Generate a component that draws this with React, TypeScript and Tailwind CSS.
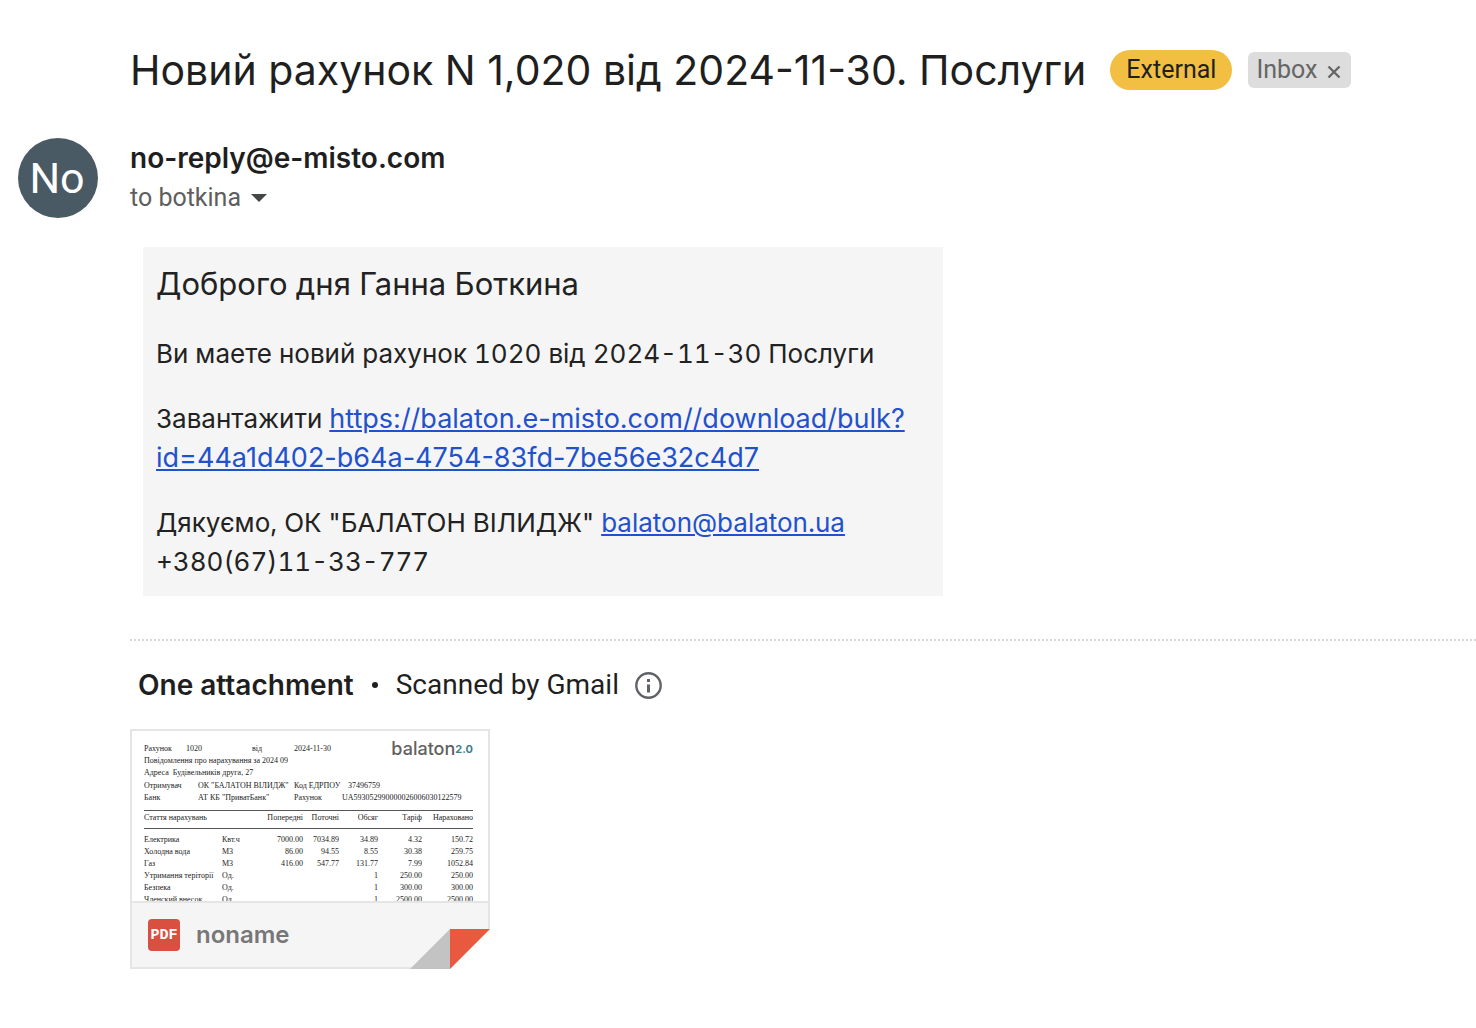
const charges = [
  { name: "Електрика", unit: "Квт.ч", prev: "7000.00", curr: "7034.89", volume: "34.89", rate: "4.32", total: "150.72" },
  { name: "Холодна вода", unit: "М3", prev: "86.00", curr: "94.55", volume: "8.55", rate: "30.38", total: "259.75" },
  { name: "Газ", unit: "М3", prev: "416.00", curr: "547.77", volume: "131.77", rate: "7.99", total: "1052.84" },
  { name: "Утримання теріторії", unit: "Од.", prev: "", curr: "", volume: "1", rate: "250.00", total: "250.00" },
  { name: "Безпека", unit: "Од.", prev: "", curr: "", volume: "1", rate: "300.00", total: "300.00" },
  { name: "Членский внесок", unit: "Од.", prev: "", curr: "", volume: "1", rate: "2500.00", total: "2500.00" },
];

const SubjectLine = () => (
  <header className="flex items-center pl-[130px] pt-10">
    <h1 className="whitespace-nowrap font-['Inter',sans-serif] text-[41px] leading-[60px] text-[#1f1f1f]">
      Новий рахунок N 1,020 від 2024-11-30. Послуги
    </h1>
    <span className="ml-6 flex h-10 shrink-0 items-center rounded-full bg-[#f2bf42] px-4 text-[25px] text-[#1f1f1f]">
      External
    </span>
    <span className="ml-4 flex h-9 shrink-0 items-center gap-2 rounded-md bg-[#dddddd] px-2 text-[25px] text-[#666666]">
      Inbox
      <button type="button" aria-label="Remove label Inbox" className="flex h-9 w-[18px] items-center justify-center pt-1">
        <svg viewBox="0 0 14 14" className="h-3.5 w-3.5" fill="none" stroke="currentColor" strokeWidth="2.4">
          <path d="M1.5 1.5l11 11M12.5 1.5l-11 11" />
        </svg>
      </button>
    </span>
  </header>
);

const Sender = () => (
  <div className="flex items-center gap-8 pl-[18px] pt-[38px]">
    <div className="flex h-20 w-20 shrink-0 items-center justify-center rounded-full bg-[#495a64] pr-0.5 text-[43px] text-white">
      No
    </div>
    <div>
      <div className="font-['Inter',sans-serif] text-[28px] font-semibold leading-10 text-[#1f1f1f]">no-reply@e-misto.com</div>
      <div className="flex h-10 items-center gap-2.5 text-[25px] text-[#5e5e5e]">
        to botkina
        <button type="button" aria-label="Show details" className="flex h-10 items-center">
          <svg viewBox="0 0 16 8" className="h-2 w-4" fill="#444746">
            <path d="M0 0h16L8 8z" />
          </svg>
        </button>
      </div>
    </div>
  </div>
);

const MessageBody = () => (
  <article className="ml-[143px] mt-[29px] flex max-w-[800px] flex-col gap-[26px] bg-[#f5f5f5] px-[13px] pb-[15px] pt-[17px] font-['Inter',sans-serif] text-[26px] leading-[39px] text-[#222222] tabular-nums">
    <h2 className="mb-1 text-[31px] leading-10">Доброго дня Ганна Боткина</h2>
    <p>Ви маете новий рахунок 1020 від 2024-11-30 Послуги</p>
    <p>
      Завантажити{" "}
      <a href="#download" className="text-[27px] text-[#2251cc] underline normal-nums">
        https://balaton.e-misto.com//download/bulk?
        <br />
        id=44a1d402-b64a-4754-83fd-7be56e32c4d7
      </a>
    </p>
    <p>
      Дякуємо, ОК "БАЛАТОН ВІЛИДЖ"{" "}
      <a href="mailto:balaton@balaton.ua" className="text-[#2251cc] underline">
        balaton@balaton.ua
      </a>
      <br />
      +380(67)11-33-777
    </p>
  </article>
);

const InvoicePreview = () => (
  <div className="h-[170px] overflow-hidden bg-white pl-3 pr-[15px] pt-3 font-['Liberation_Serif',serif] text-[8px] leading-3 text-[#222222]">
    <div className="flex justify-between">
      <div className="flex whitespace-nowrap">
        <span className="w-[42px]">Рахунок</span>
        <span className="w-[66px]">1020</span>
        <span className="w-[42px]">від</span>
        <span>2024-11-30</span>
      </div>
      <div className="flex font-['Inter',sans-serif]">
        <span className="text-[18px] font-medium text-[#616161]">balaton</span>
        <span className="text-[11px] font-bold text-[#3f7f8c]">2.0</span>
      </div>
    </div>
    <div>Повідомлення про нарахування за 2024 09</div>
    <div className="flex gap-1">
      <span>Адреса</span>
      <span>Будівельників друга, 27</span>
    </div>
    <div className="flex whitespace-nowrap pt-px">
      <span className="w-[54px]">Отримувач</span>
      <span className="w-24">ОК "БАЛАТОН ВІЛИДЖ"</span>
      <span className="w-[54px]">Код ЕДРПОУ</span>
      <span>37496759</span>
    </div>
    <div className="flex whitespace-nowrap">
      <span className="w-[54px]">Банк</span>
      <span className="w-24">АТ КБ "ПриватБанк"</span>
      <span className="w-12">Рахунок</span>
      <span>UA593052990000026006030122579</span>
    </div>
    <table className="mt-1.5 w-full table-fixed border-collapse whitespace-nowrap text-right">
      <colgroup>
        <col className="w-[78px]" />
        <col className="w-[27px]" />
        <col className="w-[54px]" />
        <col className="w-9" />
        <col className="w-[39px]" />
        <col className="w-11" />
        <col className="w-[51px]" />
      </colgroup>
      <thead>
        <tr className="h-[18px] border-y border-[#555555]">
          <th colSpan={2} className="pb-1 text-left font-normal">Стаття нарахувань</th>
          <th className="pb-1 font-normal">Попередні</th>
          <th className="pb-1 font-normal">Поточні</th>
          <th className="pb-1 font-normal">Обсяг</th>
          <th className="pb-1 font-normal">Таріф</th>
          <th className="pb-1 font-normal">Нараховано</th>
        </tr>
      </thead>
      <tbody className="before:block before:h-[5px]">
        {charges.map((row) => (
          <tr key={row.name}>
            <td className="text-left">{row.name}</td>
            <td className="text-left">{row.unit}</td>
            <td>{row.prev}</td>
            <td>{row.curr}</td>
            <td>{row.volume}</td>
            <td>{row.rate}</td>
            <td>{row.total}</td>
          </tr>
        ))}
      </tbody>
    </table>
  </div>
);

const Attachments = () => (
  <section className="ml-[130px] mt-[43px] border-t-2 border-dotted border-[#d8d8d8] pt-6">
    <div className="flex h-10 items-center pl-2 text-[28px] text-[#1f1f1f]">
      <h2 className="font-['Inter',sans-serif] font-semibold">One attachment</h2>
      <span className="mx-[18px] h-1.5 w-1.5 rounded-full bg-[#1f1f1f]" />
      <span>Scanned by Gmail</span>
      <button type="button" aria-label="About scanning" className="ml-4 text-[#5f6368]">
        <svg viewBox="0 0 27 27" className="h-[27px] w-[27px]" fill="none" stroke="currentColor">
          <circle cx="13.5" cy="13.5" r="12.2" strokeWidth="2.4" />
          <path d="M13.5 12.5v8M13.5 7v3" strokeWidth="3" />
        </svg>
      </button>
    </div>
    <div className="relative mt-6 w-[360px] border-2 border-[#e5e5e5]">
      <InvoicePreview />
      <div className="flex h-[66px] items-center gap-4 border-t-2 border-[#e5e5e5] bg-[#f5f5f5] pl-4">
        <span className="flex h-8 w-8 items-center justify-center rounded-sm bg-[#d94f40] pt-0.5 font-['Liberation_Mono',monospace] text-[15px] font-black text-white">
          PDF
        </span>
        <span className="font-['Inter',sans-serif] text-[24px] font-semibold text-[#777777]">noname</span>
      </div>
      {/* folded corner */}
      <svg viewBox="0 0 80 40" className="absolute -bottom-0.5 -right-0.5 h-10 w-20">
        <path d="M40 40L80 0v40z" fill="#ffffff" />
        <path d="M0 40L40 0v40z" fill="#c3c3c3" />
        <path d="M40 0h40L40 40z" fill="#e8593f" />
      </svg>
    </div>
  </section>
);

export default function App() {
  return (
    <main className="min-h-screen bg-white font-['Roboto',sans-serif]">
      <SubjectLine />
      <Sender />
      <MessageBody />
      <Attachments />
    </main>
  );
}
